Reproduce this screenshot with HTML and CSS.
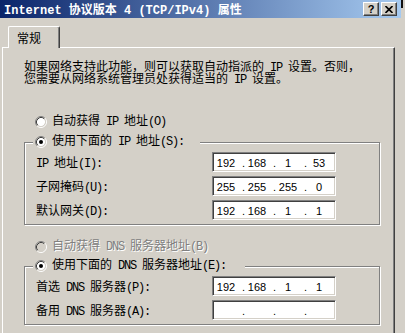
FILE: index.html
```html
<!DOCTYPE html>
<html lang="zh-CN">
<head>
    <meta charset="UTF-8">
    <title>Internet 协议版本 4 (TCP/IPv4) 属性</title>
    <link rel="stylesheet" href="styles.css">
</head>
<body>
    <div class="window">
        <div class="header">
            <div class="titlebar">
                <span class="title">Internet 协议版本 4 (TCP/IPv4) 属性</span>
                <div class="caption-btns">
                    <span class="cbtn help">?</span>
                    <span class="cbtn close">
                        <svg width="8" height="7" viewBox="0 0 8 7">
                            <path d="M0.5 0 L7.5 7 M7.5 0 L0.5 7" stroke="#000" stroke-width="1.6" fill="none"/>
                        </svg>
                    </span>
                </div>
            </div>
            <span class="frame-edge"></span>
        </div>

        <div class="tabs">
            <div class="tab active">常规</div>
        </div>

        <div class="panel">
            <p class="intro">如果网络支持此功能，则可以获取自动指派的<span class="lat"> IP </span>设置。否则，<br>您需要从网络系统管理员处获得适当的<span class="lat"> IP </span>设置。</p>

            <!-- IP address -->
            <div class="radio first-radio">
                <svg class="radio-dot" width="12" height="12" viewBox="0 0 12 12">
                    <circle cx="6" cy="6" r="4.2" fill="#fff"/>
                    <path d="M9.89 2.11 A5.5 5.5 0 0 0 2.11 9.89" stroke="#808080" fill="none"/>
                    <path d="M9.89 2.11 A5.5 5.5 0 0 1 2.11 9.89" stroke="#fff" fill="none"/>
                    <path d="M9.18 2.82 A4.5 4.5 0 0 0 2.82 9.18" stroke="#404040" fill="none"/>
                    <path d="M9.18 2.82 A4.5 4.5 0 0 1 2.82 9.18" stroke="#d4d0c8" fill="none"/>
                </svg>
                <span>自动获得<span class="lat"> IP </span>地址<span class="lat">(O)</span></span>
            </div>

            <div class="group">
                <div class="radio legend">
                    <svg class="radio-dot" width="12" height="12" viewBox="0 0 12 12">
                        <circle cx="6" cy="6" r="4.2" fill="#fff"/>
                        <path d="M9.89 2.11 A5.5 5.5 0 0 0 2.11 9.89" stroke="#808080" fill="none"/>
                        <path d="M9.89 2.11 A5.5 5.5 0 0 1 2.11 9.89" stroke="#fff" fill="none"/>
                        <path d="M9.18 2.82 A4.5 4.5 0 0 0 2.82 9.18" stroke="#404040" fill="none"/>
                        <path d="M9.18 2.82 A4.5 4.5 0 0 1 2.82 9.18" stroke="#d4d0c8" fill="none"/>
                        <circle cx="6" cy="6" r="2" fill="#000"/>
                    </svg>
                    <span>使用下面的<span class="lat"> IP </span>地址<span class="lat">(S):</span></span>
                </div>
                <div class="rows">
                    <div class="field-row">
                        <span class="field-label"><span class="lat">IP </span>地址<span class="lat">(I):</span></span>
                        <div class="ipbox"><span class="oct">192</span><span class="dot">.</span><span class="oct">168</span><span class="dot">.</span><span class="oct">1</span><span class="dot">.</span><span class="oct">53</span></div>
                    </div>
                    <div class="field-row">
                        <span class="field-label">子网掩码<span class="lat">(U):</span></span>
                        <div class="ipbox"><span class="oct">255</span><span class="dot">.</span><span class="oct">255</span><span class="dot">.</span><span class="oct">255</span><span class="dot">.</span><span class="oct">0</span></div>
                    </div>
                    <div class="field-row">
                        <span class="field-label">默认网关<span class="lat">(D):</span></span>
                        <div class="ipbox"><span class="oct">192</span><span class="dot">.</span><span class="oct">168</span><span class="dot">.</span><span class="oct">1</span><span class="dot">.</span><span class="oct">1</span></div>
                    </div>
                </div>
            </div>

            <!-- DNS -->
            <div class="radio dns-radio disabled">
                <svg class="radio-dot" width="12" height="12" viewBox="0 0 12 12">
                    <circle cx="6" cy="6" r="4.2" fill="#d4d0c8"/>
                    <path d="M9.89 2.11 A5.5 5.5 0 0 0 2.11 9.89" stroke="#808080" fill="none"/>
                    <path d="M9.89 2.11 A5.5 5.5 0 0 1 2.11 9.89" stroke="#fff" fill="none"/>
                    <path d="M9.18 2.82 A4.5 4.5 0 0 0 2.82 9.18" stroke="#404040" fill="none"/>
                    <path d="M9.18 2.82 A4.5 4.5 0 0 1 2.82 9.18" stroke="#d4d0c8" fill="none"/>
                </svg>
                <span>自动获得<span class="lat"> DNS </span>服务器地址<span class="lat">(B)</span></span>
            </div>

            <div class="group dns-group">
                <div class="radio legend dns-legend">
                    <svg class="radio-dot" width="12" height="12" viewBox="0 0 12 12">
                        <circle cx="6" cy="6" r="4.2" fill="#fff"/>
                        <path d="M9.89 2.11 A5.5 5.5 0 0 0 2.11 9.89" stroke="#808080" fill="none"/>
                        <path d="M9.89 2.11 A5.5 5.5 0 0 1 2.11 9.89" stroke="#fff" fill="none"/>
                        <path d="M9.18 2.82 A4.5 4.5 0 0 0 2.82 9.18" stroke="#404040" fill="none"/>
                        <path d="M9.18 2.82 A4.5 4.5 0 0 1 2.82 9.18" stroke="#d4d0c8" fill="none"/>
                        <circle cx="6" cy="6" r="2" fill="#000"/>
                    </svg>
                    <span>使用下面的<span class="lat"> DNS </span>服务器地址<span class="lat">(E):</span></span>
                </div>
                <div class="rows">
                    <div class="field-row">
                        <span class="field-label">首选<span class="lat"> DNS </span>服务器<span class="lat">(P):</span></span>
                        <div class="ipbox"><span class="oct">192</span><span class="dot">.</span><span class="oct">168</span><span class="dot">.</span><span class="oct">1</span><span class="dot">.</span><span class="oct">1</span></div>
                    </div>
                    <div class="field-row">
                        <span class="field-label">备用<span class="lat"> DNS </span>服务器<span class="lat">(A):</span></span>
                        <div class="ipbox"><span class="oct"></span><span class="dot">.</span><span class="oct"></span><span class="dot">.</span><span class="oct"></span><span class="dot">.</span><span class="oct"></span></div>
                    </div>
                </div>
            </div>
        </div>
    </div>
</body>
</html>
```

FILE: styles.css
```css
/* Page */
body {
    margin: 0;
    width: 405px;
    height: 333px;
    overflow: hidden;
    background: #d4d0c8;
    font-family: "Liberation Mono", "Noto Sans CJK SC", monospace;
    font-size: 12px;
    color: #000;
}

/* half-width latin, like the system font */
.lat {
    letter-spacing: -1.2px;
}

/* Title bar */
.header {
    display: flex;
    align-items: flex-start;
}

.titlebar {
    width: 401px;
    height: 18px;
    box-sizing: border-box;
    padding: 0 4px 0 4px;
    display: flex;
    align-items: center;
    justify-content: space-between;
    background: linear-gradient(to right, #0a246a, #a6caf0);
}

.title {
    color: #fff;
    font-weight: bold;
    line-height: 14px;
    padding-top: 3px;
    white-space: nowrap;
}

.caption-btns {
    display: flex;
    gap: 2px;
}

.cbtn {
    width: 16px;
    height: 14px;
    box-sizing: border-box;
    display: flex;
    align-items: center;
    justify-content: center;
    background: #d4d0c8;
    border: 1px solid;
    border-color: #fff #404040 #404040 #fff;
    box-shadow: inset -1px -1px 0 #808080;
}

.cbtn.help {
    font-family: "Liberation Sans", sans-serif;
    font-weight: bold;
    font-size: 11px;
    line-height: 12px;
}

.frame-edge {
    width: 2px;
    height: 8px;
    background: #111;
}

/* Tabs */
.tabs {
    display: flex;
    margin-top: 8px;
    padding-left: 8px;
}

.tab {
    width: 52px;
    height: 22px;
    box-sizing: border-box;
    margin-bottom: -1px;
    padding: 4px 0 0 8px;
    background: #d4d0c8;
    border-top: 1px solid #fff;
    border-left: 1px solid #fff;
    border-right: 1px solid #404040;
    border-radius: 2px 2px 0 0;
    box-shadow: inset -1px 0 0 #808080;
    font-family: "Noto Sans CJK SC", sans-serif;
    line-height: 14px;
    position: relative;
    z-index: 1;
}

/* Panel */
.panel {
    width: 393px;
    height: 300px;
    box-sizing: border-box;
    margin-left: 2px;
    padding: 14px 0 0 21px;
    border: 1px solid;
    border-color: #fff #404040 #404040 #fff;
    box-shadow: inset -1px -1px 0 #808080;
}

.intro {
    margin: 0;
    line-height: 12px;
    white-space: nowrap;
}

/* Radio buttons */
.radio {
    display: flex;
    align-items: center;
    gap: 5px;
    height: 16px;
    line-height: 16px;
    white-space: nowrap;
}

.radio-dot {
    flex: none;
}

.first-radio {
    margin: 28px 0 0 11px;
}

.dns-radio {
    margin: 14px 0 0 11px;
}

.radio.disabled {
    color: #808080;
    text-shadow: 1px 1px 0 #fff;
}

/* Group boxes */
.group {
    width: 356px;
    box-sizing: border-box;
    margin-top: 12px;
    padding: 0 0 4px 11px;
    border: 1px solid #808080;
    box-shadow: 1px 1px 0 #fff, inset 1px 1px 0 #fff;
}

.dns-group {
    margin-top: 11px;
}

.legend {
    width: fit-content;
    margin: -9px 0 0 -3px;
    padding: 0 16px 0 2px;
    background: #d4d0c8;
}

.dns-legend {
    padding-right: 19px;
}

.rows {
    display: flex;
    flex-direction: column;
    gap: 4px;
    margin-top: 2px;
}

.field-row {
    display: flex;
    align-items: center;
    height: 20px;
}

.field-label {
    width: 176px;
    white-space: nowrap;
}

/* IP address box */
.ipbox {
    width: 124px;
    height: 20px;
    box-sizing: border-box;
    padding: 1px 0 0 1px;
    display: flex;
    align-items: center;
    background: #fff;
    border: 1px solid;
    border-color: #808080 #fff #fff #808080;
    box-shadow: inset 1px 1px 0 #404040, inset -1px -1px 0 #d4d0c8;
    font-family: "Liberation Sans", sans-serif;
    font-size: 11px;
}

.oct {
    width: 24px;
    text-align: center;
}

.dot {
    width: 7px;
    text-align: right;
}
```
